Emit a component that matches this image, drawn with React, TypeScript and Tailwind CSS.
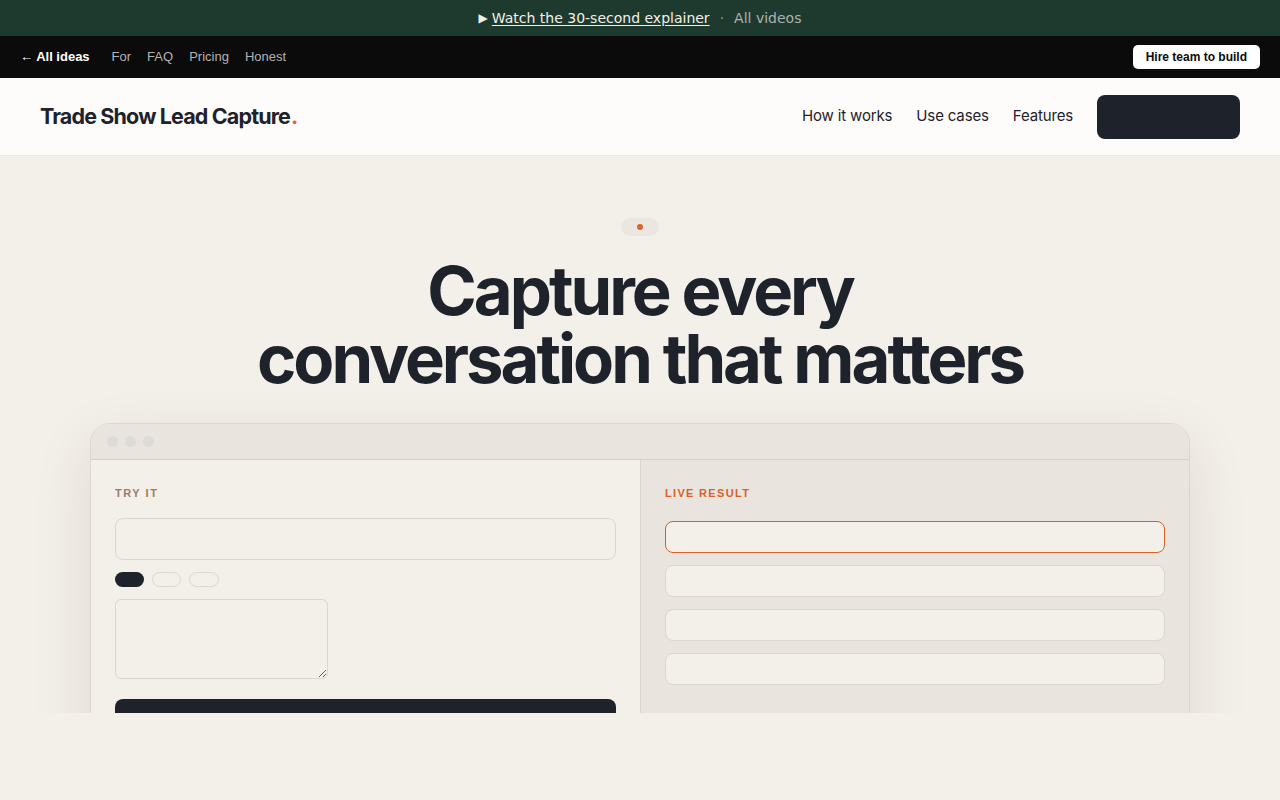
const display = "font-['Inter',sans-serif]";

function Banner() {
	return (
		<div className="flex h-9 items-center justify-center bg-[#1e3a2f] font-['DejaVu_Sans',sans-serif] text-[14px] text-[#f3efe6]">
			<span className="mr-1 text-[12px]">▶</span>
			<a className="underline underline-offset-2">Watch the 30-second explainer</a>
			<span className="mx-2.5 text-[#8f9c95]">·</span>
			<a className="text-[#a9b2ad]">All videos</a>
		</div>
	);
}

function TopNav() {
	return (
		<div className="flex h-[42px] items-center justify-between bg-[#0b0b0b] px-5 font-['Liberation_Sans',sans-serif] text-[13px]">
			<div className="flex items-center gap-4">
				<a className="mr-1.5 font-bold text-white">← All ideas</a>
				<a className="text-[#b3b3b3]">For</a>
				<a className="text-[#b3b3b3]">FAQ</a>
				<a className="text-[#b3b3b3]">Pricing</a>
				<a className="text-[#b3b3b3]">Honest</a>
			</div>
			<button className="h-6 rounded-[5px] bg-white px-[13px] text-[12px] font-bold text-[#0b0b0b]">
				Hire team to build
			</button>
		</div>
	);
}

function Header() {
	return (
		<header className={`flex h-[78px] items-center justify-between border-b border-[#ebe6df] bg-[#fdfcfa] px-10 ${display}`}>
			<div className="text-[21.5px] font-bold tracking-[-0.04em] text-[#1e222b]">
				Trade Show Lead Capture<span className="ml-[1px] text-[#e0622c]">.</span>
			</div>
			<nav className="flex items-center text-[15px] text-[#1e222b]">
				<a className="mr-6 tracking-[-0.01em]">How it works</a>
				<a className="mr-6 tracking-[-0.01em]">Use cases</a>
				<a className="mr-6 tracking-[-0.01em]">Features</a>
				<button className="h-11 w-[143px] rounded-lg bg-[#1e222b]" />
			</nav>
		</header>
	);
}

function TryPanel() {
	return (
		<div className="flex flex-col bg-[#f3efe9] px-6 pt-[25px]">
			<div className="font-['Liberation_Sans',sans-serif] text-[11px] font-bold tracking-[0.14em] text-[#9a7d62]">TRY IT</div>
			<div className="mt-4 h-[42px] rounded-lg border border-[#dcd6cf] bg-[#f3efe9]" />
			<div className="mt-3 flex gap-2">
				<span className="h-[15px] w-[29px] rounded-full bg-[#1e222b]" />
				<span className="h-[15px] w-[29px] rounded-full border border-[#ddd7d0]" />
				<span className="h-[15px] w-[30px] rounded-full border border-[#ddd7d0]" />
			</div>
			<textarea className="mt-3 h-20 w-[213px] rounded-md border border-[#dcd6cf] bg-[#f3efe9] outline-none" />
			<div className="mt-5 h-11 rounded-lg bg-[#1e222b]" />
		</div>
	);
}

function ResultPanel() {
	return (
		<div className="flex flex-col gap-3 border-l border-[#dcd6cf] bg-[#e9e4de] px-6 pt-[25px]">
			<div className="mb-[7px] font-['Liberation_Sans',sans-serif] text-[11px] font-bold tracking-[0.12em] text-[#d9602b]">LIVE RESULT</div>
			<div className="h-8 rounded-lg border border-[#d9602b] bg-[#f3efe9]" />
			<div className="h-8 rounded-lg border border-[#dcd6cf] bg-[#f3efe9]" />
			<div className="h-8 rounded-lg border border-[#dcd6cf] bg-[#f3efe9]" />
			<div className="h-8 rounded-lg border border-[#dcd6cf] bg-[#f3efe9]" />
		</div>
	);
}

function Hero() {
	return (
		<section className="h-[557px] overflow-hidden bg-[#f3efe9]">
			<div className="flex flex-col items-center pt-[62px]">
				<div className="flex h-[18px] w-[38px] items-center justify-center rounded-full bg-[#ebe6e0]">
					<span className="size-1.5 rounded-full bg-[#e0622c]" />
				</div>
				<h1 className={`mt-[21px] text-center text-[67px] font-bold leading-[68px] tracking-[-0.045em] text-[#1e222b] ${display}`}>
					Capture every
					<br />
					conversation that matters
				</h1>
				<div className="mt-[30px] w-[1100px] overflow-hidden rounded-[20px] border border-[#dcd6cf] shadow-[0_20px_60px_rgba(60,40,20,0.10)]">
					<div className="flex h-9 items-center gap-[7px] border-b border-[#d6d0c9] bg-[#e9e4de] px-4">
						<span className="size-[11px] rounded-full bg-[#dddbd9]" />
						<span className="size-[11px] rounded-full bg-[#dddbd9]" />
						<span className="size-[11px] rounded-full bg-[#dddbd9]" />
					</div>
					<div className="grid h-[400px] grid-cols-2">
						<TryPanel />
						<ResultPanel />
					</div>
				</div>
			</div>
		</section>
	);
}

export default function App() {
	return (
		<div className="min-h-[800px] bg-[#f3efe9]">
			<Banner />
			<TopNav />
			<Header />
			<Hero />
		</div>
	);
}
